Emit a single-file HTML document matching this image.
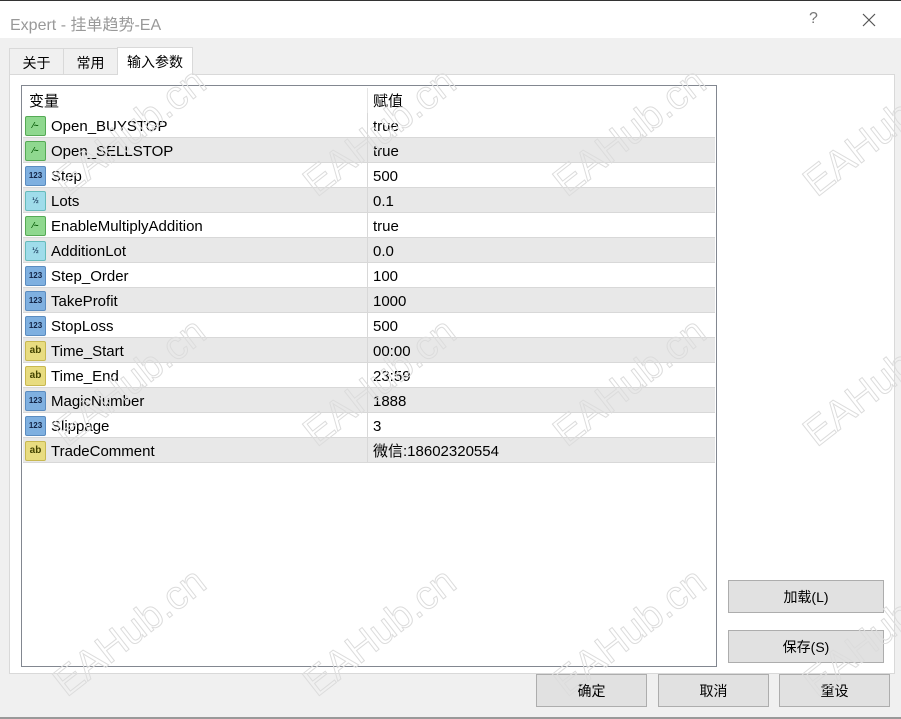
<!DOCTYPE html>
<html><head><meta charset="utf-8"><style>
body{margin:0;width:901px;height:719px;overflow:hidden;background:#f0f0f0;font-family:"Liberation Sans","Noto Sans CJK SC",sans-serif;position:relative}
.title{position:absolute;left:0;top:0;width:901px;height:38px;background:#fff;border-top:1px solid #333;box-sizing:border-box}
.title span{position:absolute;left:10px;top:10px;font-size:16px;color:#999}
.q{position:absolute;left:809px;top:9px;font-size:16px;color:#777}
.tab{position:absolute;top:48px;height:26px;border:1px solid #d9d9d9;border-bottom:none;font-size:14px;line-height:28px;text-align:center;box-sizing:border-box;background:#f0f0f0}
.page{position:absolute;left:9px;top:74px;width:886px;height:600px;background:#fff;border:1px solid #d9d9d9;box-sizing:border-box}
.list{position:absolute;left:21px;top:85px;width:696px;height:582px;border:1px solid #828790;box-sizing:border-box;background:#fff}
.row{position:absolute;left:1px;width:692px;height:25px;font-size:15px;line-height:27px;border-bottom:1px solid #d8d8d8;box-sizing:border-box}
.row.g{background:#e8e8e8}
.row .n{position:absolute;left:28px}
.row .v{position:absolute;left:350px}
.row .s{position:absolute;left:344px;top:0;width:1px;height:25px;background:#d8d8d8}
.ic{position:absolute;left:2px;top:3px;width:19px;height:18px;border-radius:2px;font-size:8px;font-weight:bold;line-height:18px;text-align:center;font-style:normal}
.b{background:#7fb0e0;color:#124;border:1px solid #5a8cc0}
.h{background:#9fdcea;color:#246;border:1px solid #6bb}
.t{background:#e8dc80;color:#440;border:1px solid #c8b850;font-size:10px}
.o{background:#8fd88f;color:#050;border:1px solid #5a5}
.btn{position:absolute;height:33px;background:#e1e1e1;border:1px solid #adadad;box-sizing:border-box;font-size:14px;text-align:center;line-height:33px}
.wm{position:absolute;font-size:40px;color:transparent;-webkit-text-stroke:1px #dcdcdc;transform:rotate(-38deg);font-family:"Liberation Sans",sans-serif;white-space:nowrap}
</style></head><body>
<div class="title"><span>Expert - 挂单趋势-EA</span><div class="q">?</div>
<svg style="position:absolute;left:862px;top:12px" width="14" height="14"><path d="M1 1L13 13M13 1L1 13" stroke="#555" stroke-width="1.2"/></svg></div>
<div class="page"></div>
<div class="tab" style="left:9px;width:55px">关于</div>
<div class="tab" style="left:63px;width:55px">常用</div>
<div class="tab" style="left:117px;width:76px;top:47px;height:28px;background:#fff">输入参数</div>
<div class="list">
<div class="row" style="top:2px;border:none"><span class="n" style="left:6px">变量</span><span class="v">赋值</span><span class="s" style="background:#e5e5e5"></span></div>
<div class="row" style="top:27px"><i class="ic o">⁄~</i><span class="n">Open_BUYSTOP</span><span class="s"></span><span class="v">true</span></div>
<div class="row g" style="top:52px"><i class="ic o">⁄~</i><span class="n">Open_SELLSTOP</span><span class="s"></span><span class="v">true</span></div>
<div class="row" style="top:77px"><i class="ic b">123</i><span class="n">Step</span><span class="s"></span><span class="v">500</span></div>
<div class="row g" style="top:102px"><i class="ic h">½</i><span class="n">Lots</span><span class="s"></span><span class="v">0.1</span></div>
<div class="row" style="top:127px"><i class="ic o">⁄~</i><span class="n">EnableMultiplyAddition</span><span class="s"></span><span class="v">true</span></div>
<div class="row g" style="top:152px"><i class="ic h">½</i><span class="n">AdditionLot</span><span class="s"></span><span class="v">0.0</span></div>
<div class="row" style="top:177px"><i class="ic b">123</i><span class="n">Step_Order</span><span class="s"></span><span class="v">100</span></div>
<div class="row g" style="top:202px"><i class="ic b">123</i><span class="n">TakeProfit</span><span class="s"></span><span class="v">1000</span></div>
<div class="row" style="top:227px"><i class="ic b">123</i><span class="n">StopLoss</span><span class="s"></span><span class="v">500</span></div>
<div class="row g" style="top:252px"><i class="ic t">ab</i><span class="n">Time_Start</span><span class="s"></span><span class="v">00:00</span></div>
<div class="row" style="top:277px"><i class="ic t">ab</i><span class="n">Time_End</span><span class="s"></span><span class="v">23:59</span></div>
<div class="row g" style="top:302px"><i class="ic b">123</i><span class="n">MagicNumber</span><span class="s"></span><span class="v">1888</span></div>
<div class="row" style="top:327px"><i class="ic b">123</i><span class="n">Slippage</span><span class="s"></span><span class="v">3</span></div>
<div class="row g" style="top:352px"><i class="ic t">ab</i><span class="n">TradeComment</span><span class="s"></span><span class="v">微信:18602320554</span></div>
</div>
<div class="btn" style="left:728px;top:580px;width:156px">加载(L)</div>
<div class="btn" style="left:728px;top:630px;width:156px">保存(S)</div>
<div class="btn" style="left:536px;top:674px;width:111px">确定</div>
<div class="btn" style="left:658px;top:674px;width:111px">取消</div>
<div class="btn" style="left:779px;top:674px;width:111px">重设</div>
<div style="position:absolute;left:0;top:717px;width:901px;height:2px;background:#999"></div>
<div class="wm" style="left:40px;top:110px">EAHub.cn</div>
<div class="wm" style="left:290px;top:110px">EAHub.cn</div>
<div class="wm" style="left:540px;top:110px">EAHub.cn</div>
<div class="wm" style="left:790px;top:110px">EAHub.cn</div>
<div class="wm" style="left:40px;top:360px">EAHub.cn</div>
<div class="wm" style="left:290px;top:360px">EAHub.cn</div>
<div class="wm" style="left:540px;top:360px">EAHub.cn</div>
<div class="wm" style="left:790px;top:360px">EAHub.cn</div>
<div class="wm" style="left:40px;top:610px">EAHub.cn</div>
<div class="wm" style="left:290px;top:610px">EAHub.cn</div>
<div class="wm" style="left:540px;top:610px">EAHub.cn</div>
<div class="wm" style="left:790px;top:610px">EAHub.cn</div>
</body></html>
